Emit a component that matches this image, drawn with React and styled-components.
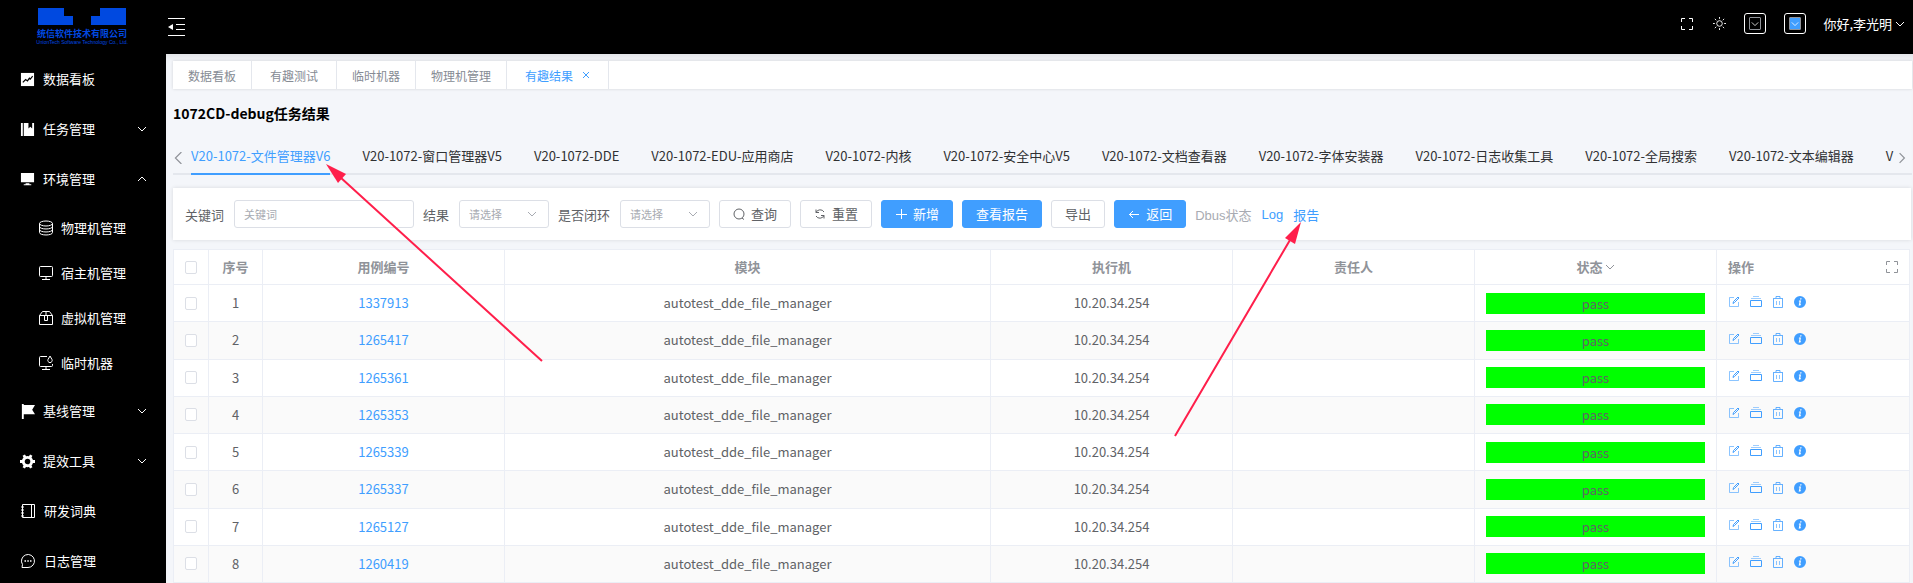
import React from 'react';
import styled, { createGlobalStyle } from 'styled-components';

const Global = createGlobalStyle`
  * { box-sizing: border-box; }
  body { margin: 0; background: #f4f6fa; }
  body, button, input, select { font-family: "Noto Sans CJK SC", "Noto Sans", sans-serif; font-size: 13px; }
  button { cursor: pointer; }
  a { text-decoration: none; }
`;

/* ---------- icons ---------- */
const Svg = styled.svg`
  display: block;
  flex: none;
  fill: ${(p) => (p.$solid ? 'currentColor' : 'none')};
  stroke: ${(p) => (p.$solid ? 'none' : 'currentColor')};
`;

const Chevron = ({ dir = 'down', size = 10 }) => (
  <Svg width={size} height={size} viewBox="0 0 10 10" strokeWidth="1">
    <path d={{ down: 'M1 3l4 4 4-4', up: 'M1 7l4-4 4 4', left: 'M7 0L2 5l5 5', right: 'M3 1l4 4-4 4' }[dir]} />
  </Svg>
);

const shapes = {
  board: (
    <>
      <path d="M1 1h14v14H1z" />
      <path d="M3 11l3-3 2 1.500L10 6.500l1 1L13.500 4.500" fill="none" stroke="#000" strokeWidth="1.300" />
    </>
  ),
  task: <path d="M1 1h2v14H1zM4 1h5v6l2-2 2 2V1h2v14H4z" />,
  screen: <path d="M1 1h14v10H1zM6 12h4v1h2v1H4v-1h2z" />,
  flag: <path d="M2 0h2v16H2zM4 1h12l-3 5 3 5H4z" />,
  gear: (
    <>
      <circle cx="8" cy="8" r="4.500" fill="none" stroke="currentColor" strokeWidth="3" />
      <path
        d="M4 1.200L5.700 4M12 1.200L10.300 4M4 14.800L5.700 12M12 14.800L10.300 12M0 8H3M13 8h3"
        stroke="currentColor"
        strokeWidth="3"
      />
    </>
  ),
};
const outlines = {
  disks: (
    <>
      <ellipse cx="8" cy="3.500" rx="6.500" ry="2.500" />
      <path d="M1.500 3.500v9c0 3.300 13 3.300 13 0v-9M1.500 6.500c0 3.300 13 3.300 13 0M1.500 9.500c0 3.300 13 3.300 13 0" />
    </>
  ),
  monitor: <path d="M2.500 1.500h11q1 0 1 1v8q0 1-1 1h-11q-1 0-1-1v-8q0-1 1-1zM8 12v2M4 14.500h8" />,
  box: <path d="M1.500 5.500h13v9h-13zM1.500 5.500l3-4h7l3 4M6.500 5v5.500h3V5M8 2v3" />,
  temp: <path d="M9 1.500H2.500q-1 0-1 1v8q0 1 1 1h11q1 0 1-1V9M8 12v2M4 14.500h8M12 1l2 3.500a2.200 2.200 0 11-4 0z" />,
  book: <path d="M2.500 1.500h12v13h-12zM11.500 2v12M1 4h3M1 7h3M1 10h3M1 13h3" />,
  chat: (
    <>
      <path d="M2 14.500l.5-3A6.500 6.500 0 118 14.500z" />
      <path strokeWidth="1.500" d="M4.500 8H6M7.300 8h1.500M10 8h1.500" />
    </>
  ),
};
const Glyph = ({ name }) =>
  shapes[name] ? (
    <Svg $solid width="15" height="15" viewBox="0 0 16 16">{shapes[name]}</Svg>
  ) : (
    <Svg width="16" height="16" viewBox="0 0 16 16" strokeWidth="1">{outlines[name]}</Svg>
  );

const Expand = () => (
  <Svg width="12" height="12" viewBox="0 0 12 12">
    <path d="M.5 4V.5H4M8 .5h3.500V4M11.500 8v3.500H8M4 11.500H.5V8" />
  </Svg>
);
const Sun = () => (
  <Svg width="13" height="13" viewBox="0 0 14 14">
    <circle cx="7" cy="7" r="3" />
    <path d="M7 0v2M7 12v2M0 7h2M12 7h2M2 2l1.500 1.500M10.500 10.500L12 12M12 2l-1.500 1.500M3.500 10.500L2 12" />
  </Svg>
);

/* ---------- shell ---------- */
const Shell = styled.div`
  display: flex;
  min-height: 100vh;
  position: relative;
`;
const Side = styled.aside`
  width: 166px;
  flex: none;
  background: #000;
  color: #fff;
`;
const Right = styled.div`
  flex: 1;
  min-width: 0;
  display: flex;
  flex-direction: column;
`;
const Logo = styled.div`
  display: flex;
  flex-direction: column;
  align-items: center;
  height: 54px;
  padding: 8px 2px 0 0;
  color: #0049e0;
`;
const LogoText = styled.div`
  font-size: 9px;
  font-weight: 700;
  line-height: 12px;
  margin-top: 3px;
  white-space: nowrap;
`;
const LogoSub = styled.div`
  font-family: "Liberation Sans", sans-serif;
  font-size: 5px;
  line-height: 5px;
  white-space: nowrap;
`;
const Submenu = styled.div`
  padding: 1px 0;
`;
const MenuItem = styled.a`
  display: flex;
  align-items: center;
  gap: ${(p) => (p.$sub ? 7 : 8)}px;
  height: ${(p) => (p.$sub ? 45 : 50)}px;
  padding: 0 19px 0 ${(p) => (p.$sub ? 38 : 20)}px;
  color: #fff;
  line-height: 20px;
`;
const MenuText = styled.span`
  flex: 1;
  white-space: nowrap;
`;
const Header = styled.header`
  display: flex;
  align-items: flex-start;
  justify-content: space-between;
  height: 54px;
  padding: 13px 8px 0 2px;
  background: #000;
  color: #fff;
`;
const HeaderTools = styled.div`
  display: flex;
  align-items: center;
  height: 21px;
`;
const IconButton = styled.button`
  display: flex;
  align-items: center;
  justify-content: center;
  padding: 0;
  border: 0;
  background: none;
  color: inherit;
  margin-right: ${(p) => p.$gap || 0}px;
`;
const Framed = styled(IconButton)`
  width: 22px;
  height: 21px;
  border: 1px solid #fff;
  border-radius: 3px;
  margin-right: ${(p) => p.$gap}px;
`;
const FrameCore = styled.span`
  display: flex;
  align-items: center;
  justify-content: center;
  width: 12px;
  height: 13px;
  border: 1px solid #909399;
  border-radius: 1px;
  background: ${(p) => (p.$on ? '#409eff' : 'transparent')};
`;
const User = styled(IconButton)`
  gap: 3px;
`;

/* ---------- page ---------- */
const Page = styled.main`
  flex: 1;
  display: flex;
  flex-direction: column;
  padding: 7px 1px 3px 7px;
  box-shadow: inset 0 6px 6px -3px rgba(0, 0, 0, 0.08);
`;
const PageTabs = styled.nav`
  display: flex;
  height: 28px;
  background: #fff;
  box-shadow: 0 0 3px rgba(0, 0, 0, 0.14);
`;
const PageTab = styled.a`
  display: flex;
  align-items: center;
  gap: 9px;
  padding: 0 ${(p) => (p.$wide ? 18 : 15)}px;
  border-right: 1px solid #e4e7ed;
  font-size: 12px;
  color: ${(p) => (p.$on ? '#409eff' : '#868b94')};
`;
const Title = styled.h1`
  margin: 13px 0 18px;
  font-size: 14px;
  line-height: 22px;
  font-weight: 700;
  color: #000;
`;
const CaseTabs = styled.nav`
  display: flex;
  align-items: center;
  height: 33px;
  margin-bottom: 13px;
  border-bottom: 2px solid #e4e7ed;
  color: #909399;
`;
const CaseScroll = styled.div`
  display: flex;
  flex: 1;
  gap: 32px;
  align-self: stretch;
  height: 33px;
  min-width: 0;
  overflow: hidden;
`;
const CaseTab = styled.a`
  flex: none;
  height: 33px;
  line-height: 27px;
  color: ${(p) => (p.$on ? '#409eff' : '#303133')};
  border-bottom: 2px solid ${(p) => (p.$on ? '#409eff' : 'transparent')};
`;
const Filters = styled.form`
  display: flex;
  align-items: center;
  height: 52px;
  padding: 0 12px;
  margin: 0 1px 9px 0;
  background: #fff;
  box-shadow: 0 0 4px rgba(0, 0, 0, 0.12);
  color: #606266;
`;
const Label = styled.label`
  margin-right: 10px;
  white-space: nowrap;
`;
const fieldBox = `
  height: 28px;
  border: 1px solid #dcdfe6;
  border-radius: 3px;
  background: #fff;
`;
const Input = styled.input`
  ${fieldBox}
  width: 180px;
  padding: 0 9px;
  margin-right: 9px;
  font-size: 11px;
  &::placeholder { color: #a8abb2; opacity: 1; }
`;
const SelectBox = styled.span`
  ${fieldBox}
  display: flex;
  align-items: center;
  width: 90px;
  padding-right: 11px;
  margin-right: 9px;
  color: #a8abb2;
`;
const Select = styled.select`
  flex: 1;
  min-width: 0;
  height: 26px;
  border: 0;
  padding: 0 0 0 9px;
  appearance: none;
  background: none;
  color: #a8abb2;
  font-size: 11px;
`;
const Button = styled.button`
  ${fieldBox}
  display: flex;
  align-items: center;
  justify-content: center;
  gap: 6px;
  padding: 0 13px;
  margin-right: 9px;
  white-space: nowrap;
  line-height: 18px;
  color: ${(p) => (p.$primary ? '#fff' : '#606266')};
  background: ${(p) => (p.$primary ? '#409eff' : '#fff')};
  border-color: ${(p) => (p.$primary ? '#409eff' : '#dcdfe6')};
`;
const TextLink = styled.a`
  margin-right: 10px;
  font-family: "Liberation Sans", "Noto Sans CJK SC", sans-serif;
  white-space: nowrap;
  color: ${(p) => (p.$muted ? '#a8abb2' : '#409eff')};
`;

/* ---------- table ---------- */
const TableArea = styled.div`
  flex: 1;
  display: flex;
  margin-right: 2px;
`;
const Table = styled.table`
  width: 100%;
  table-layout: fixed;
  border-collapse: separate;
  border-spacing: 0;
  background: #fff;
  border: 1px solid #ebeef5;
  border-width: 1px 0 0 1px;
`;
const Col = styled.col`
  width: ${(p) => p.$w || 'auto'};
`;
const Cell = styled.td`
  height: ${(p) => (p.$head ? 35 : 37)}px;
  padding: 0 11px;
  border: 1px solid #ebeef5;
  border-width: 0 1px 1px 0;
  text-align: ${(p) => (p.$left ? 'left' : 'center')};
  vertical-align: middle;
  line-height: 20px;
  color: ${(p) => (p.$head ? '#909399' : '#606266')};
  font-weight: ${(p) => (p.$head ? 700 : 400)};
`;
const Row = styled.tr`
  background: ${(p) => (p.$stripe ? '#fafafa' : '#fff')};
`;
const Check = styled.input`
  appearance: none;
  display: block;
  width: 12px;
  height: 13px;
  margin: 0 auto;
  border: 1px solid #dcdfe6;
  border-radius: 2px;
  background: #fff;
`;
const CaseLink = styled.a`
  color: #409eff;
`;
const Status = styled.div`
  height: 21px;
  line-height: 21px;
  background: #00ff00;
`;
const HeadLine = styled.div`
  display: flex;
  align-items: center;
  justify-content: ${(p) => (p.$spread ? 'space-between' : 'center')};
  gap: 2px;
`;
const Actions = styled.div`
  display: flex;
  align-items: center;
  gap: 10px;
  padding-bottom: 3px;
  color: #409eff;
`;
const Arrows = styled.svg`
  position: absolute;
  left: 0;
  top: 0;
  pointer-events: none;
`;

const menu = [
  { icon: 'board', text: '数据看板' },
  { icon: 'task', text: '任务管理', chev: 'down' },
  {
    icon: 'screen',
    text: '环境管理',
    chev: 'up',
    items: [
      { icon: 'disks', text: '物理机管理' },
      { icon: 'monitor', text: '宿主机管理' },
      { icon: 'box', text: '虚拟机管理' },
      { icon: 'temp', text: '临时机器' },
    ],
  },
  { icon: 'flag', text: '基线管理', chev: 'down' },
  { icon: 'gear', text: '提效工具', chev: 'down' },
  { icon: 'book', text: '研发词典' },
  { icon: 'chat', text: '日志管理' },
];
const caseTabs = [
  'V20-1072-文件管理器V6', 'V20-1072-窗口管理器V5', 'V20-1072-DDE', 'V20-1072-EDU-应用商店',
  'V20-1072-内核', 'V20-1072-安全中心V5', 'V20-1072-文档查看器', 'V20-1072-字体安装器',
  'V20-1072-日志收集工具', 'V20-1072-全局搜索', 'V20-1072-文本编辑器', 'V',
];
const ids = ['1337913', '1265417', '1265361', '1265353', '1265339', '1265337', '1265127', '1260419'];

const MenuEntry = ({ item, sub }) => (
  <>
    <MenuItem href="#" $sub={sub}>
      <Glyph name={item.icon} />
      <MenuText>{item.text}</MenuText>
      {item.chev && <Chevron dir={item.chev} />}
    </MenuItem>
    {item.items && (
      <Submenu>
        {item.items.map((s) => <MenuEntry key={s.text} item={s} sub />)}
      </Submenu>
    )}
  </>
);

const RowActions = () => (
  <Actions>
    <IconButton type="button" aria-label="编辑">
      <Svg width="12" height="12" viewBox="0 0 12 12">
        <path opacity=".6" d="M6 1.500H1.500v9h9V6" />
        <path d="M5 7.500l.5-2L10 1l1 1-4.500 4.500z" />
      </Svg>
    </IconButton>
    <IconButton type="button" aria-label="归档">
      <Svg width="12" height="12" viewBox="0 0 12 12">
        <path d="M.5 4.500h11v6H.5z" />
        <path opacity=".5" d="M1 2.500h10M3 .5h6" />
      </Svg>
    </IconButton>
    <IconButton type="button" aria-label="删除">
      <Svg width="12" height="12" viewBox="0 0 12 12">
        <path opacity=".8" d="M1 2.500h10M4 2V.5h4V2M1.500 3v8.500h9V3" />
        <path opacity=".6" d="M4.500 5v4M7.500 5v4" />
      </Svg>
    </IconButton>
    <IconButton type="button" aria-label="详情">
      <Svg $solid width="12" height="12" viewBox="0 0 12 12">
        <path fillRule="evenodd" d="M6 0a6 6 0 100 12A6 6 0 006 0zM6.300 2.200h1.300l-.3 1.300H6zM5 4.500h2L6.300 8.200l.7-.2-.3 1.200-2 .6.8-4.200H4.800z" />
      </Svg>
    </IconButton>
  </Actions>
);

export default function App() {
  return (
    <Shell>
      <Global />
      <Side>
        <Logo>
          <Svg $solid width="90" height="17" viewBox="0 0 90 17">
            <path d="M1 0h26v8h9v9H1zM63 0h26v17H54V8h9z" />
          </Svg>
          <LogoText>统信软件技术有限公司</LogoText>
          <LogoSub>UnionTech Software Technology Co., Ltd.</LogoSub>
        </Logo>
        {menu.map((item) => <MenuEntry key={item.text} item={item} />)}
      </Side>
      <Right>
        <Header>
          <IconButton type="button" aria-label="收起菜单">
            <Svg width="18" height="28" viewBox="0 0 18 28">
              <path d="M0 5.500h17M8 11.500h9M8 16.500h9M0 22.500h17" />
              <path d="M0 14l5-3v6z" fill="currentColor" stroke="none" />
            </Svg>
          </IconButton>
          <HeaderTools>
            <IconButton type="button" aria-label="全屏" $gap={20}><Expand /></IconButton>
            <IconButton type="button" aria-label="主题" $gap={18}><Sun /></IconButton>
            <Framed type="button" aria-label="选项" $gap={18}><FrameCore><Chevron size={8} /></FrameCore></Framed>
            <Framed type="button" aria-label="配色" $gap={17}><FrameCore $on><Chevron size={8} /></FrameCore></Framed>
            <User type="button">你好,李光明<Chevron /></User>
          </HeaderTools>
        </Header>
        <Page>
          <PageTabs>
            <PageTab href="#">数据看板</PageTab>
            <PageTab href="#" $wide>有趣测试</PageTab>
            <PageTab href="#">临时机器</PageTab>
            <PageTab href="#">物理机管理</PageTab>
            <PageTab href="#" $wide $on>
              有趣结果
              <Svg width="8" height="8" viewBox="0 0 8 8"><path d="M1 1l6 6M7 1L1 7" /></Svg>
            </PageTab>
          </PageTabs>
          <Title>1072CD-debug任务结果</Title>
          <CaseTabs>
            <IconButton type="button" aria-label="向左" $gap={6}><Chevron dir="left" size={12} /></IconButton>
            <CaseScroll>
              {caseTabs.map((t, i) => (
                <CaseTab key={t} href="#" $on={i === 0}>{t}</CaseTab>
              ))}
            </CaseScroll>
            <IconButton type="button" aria-label="向右" $gap={4}><Chevron dir="right" size={12} /></IconButton>
          </CaseTabs>
          <Filters onSubmit={(e) => e.preventDefault()}>
            <Label htmlFor="kw">关键词</Label>
            <Input id="kw" placeholder="关键词" />
            <Label htmlFor="res">结果</Label>
            <SelectBox><Select id="res"><option>请选择</option></Select><Chevron /></SelectBox>
            <Label htmlFor="loop">是否闭环</Label>
            <SelectBox><Select id="loop"><option>请选择</option></Select><Chevron /></SelectBox>
            <Button>
              <Svg width="12" height="12" viewBox="0 0 12 12"><circle cx="6" cy="6" r="5" /><path d="M9 10l2 1.500" /></Svg>查询
            </Button>
            <Button type="reset">
              <Svg width="12" height="12" viewBox="0 0 12 12"><path d="M2 1.500v3h3M2 4.500a4.500 4.500 0 018-.5M10 10.500v-3H7M10 7.500a4.500 4.500 0 01-8 .5" /></Svg>重置
            </Button>
            <Button type="button" $primary>
              <Svg width="12" height="12" viewBox="0 0 12 12"><path d="M6.500 1v10M1 6.500h11" /></Svg>新增
            </Button>
            <Button type="button" $primary>查看报告</Button>
            <Button type="button">导出</Button>
            <Button type="button" $primary>
              <Svg width="12" height="12" viewBox="0 0 12 12"><path d="M1 6.500h10M5 3L1.500 6.500 5 10" /></Svg>返回
            </Button>
            <TextLink href="#" $muted>Dbus状态</TextLink>
            <TextLink href="#">Log</TextLink>
            <TextLink href="#">报告</TextLink>
          </Filters>
          <TableArea>
            <Table>
              <colgroup>
                <Col $w="35px" /><Col $w="54px" /><Col /><Col $w="28%" />
                <Col /><Col /><Col /><Col $w="193px" />
              </colgroup>
              <thead>
                <tr>
                  <Cell as="th" $head><Check type="checkbox" aria-label="全选" /></Cell>
                  <Cell as="th" $head>序号</Cell>
                  <Cell as="th" $head>用例编号</Cell>
                  <Cell as="th" $head>模块</Cell>
                  <Cell as="th" $head>执行机</Cell>
                  <Cell as="th" $head>责任人</Cell>
                  <Cell as="th" $head><HeadLine>状态<Chevron /></HeadLine></Cell>
                  <Cell as="th" $head><HeadLine $spread>操作<IconButton type="button" aria-label="全屏表格"><Expand /></IconButton></HeadLine></Cell>
                </tr>
              </thead>
              <tbody>
                {ids.map((id, i) => (
                  <Row key={id} $stripe={i % 2 === 1}>
                    <Cell><Check type="checkbox" aria-label={`选择 ${id}`} /></Cell>
                    <Cell>{i + 1}</Cell>
                    <Cell><CaseLink href="#">{id}</CaseLink></Cell>
                    <Cell>autotest_dde_file_manager</Cell>
                    <Cell>10.20.34.254</Cell>
                    <Cell />
                    <Cell><Status>pass</Status></Cell>
                    <Cell $left><RowActions /></Cell>
                  </Row>
                ))}
              </tbody>
            </Table>
          </TableArea>
        </Page>
      </Right>
      <Arrows width="1400" height="450" viewBox="0 0 1400 450" aria-hidden="true">
        <g fill="#ff1f4b" stroke="none">
          <path d="M326 164l20 10-8 9z" />
          <path d="M1301 222l-6 22-10-6z" />
        </g>
        <path d="M340 177l202 184M1290 240l-115 196" stroke="#ff1f4b" strokeWidth="2" />
      </Arrows>
    </Shell>
  );
}
